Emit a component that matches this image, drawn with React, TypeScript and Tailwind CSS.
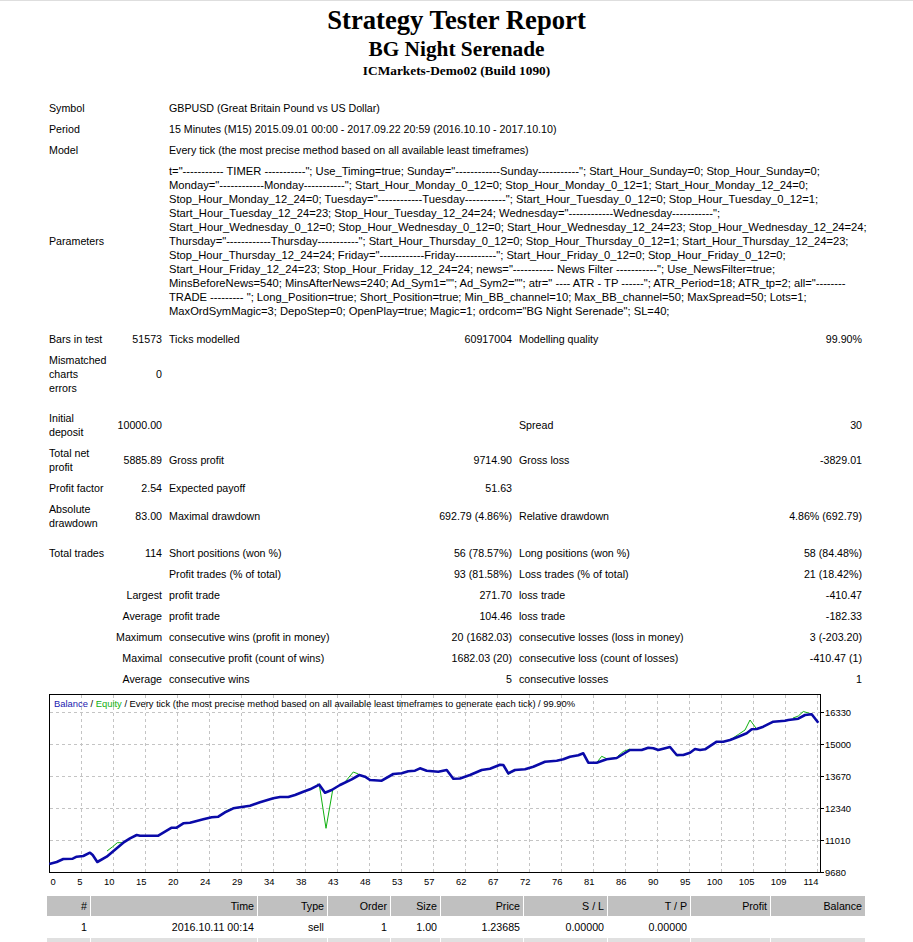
import React from 'react';

const paramLines = [
  't="----------- TIMER -----------"; Use_Timing=true; Sunday="------------Sunday-----------"; Start_Hour_Sunday=0; Stop_Hour_Sunday=0;',
  'Monday="------------Monday-----------"; Start_Hour_Monday_0_12=0; Stop_Hour_Monday_0_12=1; Start_Hour_Monday_12_24=0;',
  'Stop_Hour_Monday_12_24=0; Tuesday="------------Tuesday-----------"; Start_Hour_Tuesday_0_12=0; Stop_Hour_Tuesday_0_12=1;',
  'Start_Hour_Tuesday_12_24=23; Stop_Hour_Tuesday_12_24=24; Wednesday="------------Wednesday-----------";',
  'Start_Hour_Wednesday_0_12=0; Stop_Hour_Wednesday_0_12=0; Start_Hour_Wednesday_12_24=23; Stop_Hour_Wednesday_12_24=24;',
  'Thursday="------------Thursday-----------"; Start_Hour_Thursday_0_12=0; Stop_Hour_Thursday_0_12=1; Start_Hour_Thursday_12_24=23;',
  'Stop_Hour_Thursday_12_24=24; Friday="------------Friday-----------"; Start_Hour_Friday_0_12=0; Stop_Hour_Friday_0_12=0;',
  'Start_Hour_Friday_12_24=23; Stop_Hour_Friday_12_24=24; news="----------- News Filter -----------"; Use_NewsFilter=true;',
  'MinsBeforeNews=540; MinsAfterNews=240; Ad_Sym1=""; Ad_Sym2=""; atr=" ---- ATR - TP ------"; ATR_Period=18; ATR_tp=2; all="--------',
  'TRADE --------- "; Long_Position=true; Short_Position=true; Min_BB_channel=10; Max_BB_channel=50; MaxSpread=50; Lots=1;',
  'MaxOrdSymMagic=3; DepoStep=0; OpenPlay=true; Magic=1; ordcom="BG Night Serenade"; SL=40;',
];

// [label, value, label, value, label, value]
const statRows: { cells: React.ReactNode[]; spacerBefore?: number }[] = [
  { cells: ['Bars in test', '51573', 'Ticks modelled', '60917004', 'Modelling quality', '99.90%'], spacerBefore: 6 },
  { cells: [<>Mismatched<br />charts<br />errors</>, '0', '', '', '', ''] },
  { cells: [<>Initial<br />deposit</>, '10000.00', '', '', 'Spread', '30'], spacerBefore: 8 },
  { cells: [<>Total net<br />profit</>, '5885.89', 'Gross profit', '9714.90', 'Gross loss', '-3829.01'] },
  { cells: ['Profit factor', '2.54', 'Expected payoff', '51.63', '', ''] },
  { cells: [<>Absolute<br />drawdown</>, '83.00', 'Maximal drawdown', '692.79 (4.86%)', 'Relative drawdown', '4.86% (692.79)'] },
  { cells: ['Total trades', '114', 'Short positions (won %)', '56 (78.57%)', 'Long positions (won %)', '58 (84.48%)'], spacerBefore: 8 },
  { cells: ['', '', 'Profit trades (% of total)', '93 (81.58%)', 'Loss trades (% of total)', '21 (18.42%)'] },
  { cells: ['', 'Largest', 'profit trade', '271.70', 'loss trade', '-410.47'] },
  { cells: ['', 'Average', 'profit trade', '104.46', 'loss trade', '-182.33'] },
  { cells: ['', 'Maximum', 'consecutive wins (profit in money)', '20 (1682.03)', 'consecutive losses (loss in money)', '3 (-203.20)'] },
  { cells: ['', 'Maximal', 'consecutive profit (count of wins)', '1682.03 (20)', 'consecutive loss (count of losses)', '-410.47 (1)'] },
  { cells: ['', 'Average', 'consecutive wins', '5', 'consecutive losses', '1'] },
];

const balance: [number, number][] = [
  [4.3, 170], [11.7, 168], [18.3, 165], [27.7, 164.7], [31.7, 162.7], [38.3, 162], [45, 158.7], [47.7, 161],
  [52.3, 168], [61.7, 162.7], [78.3, 148.7], [85, 144.3], [91.7, 141], [95, 141.7], [113.3, 141.7], [120, 137.7],
  [126.7, 133.7], [131.7, 133.7], [138.3, 129.3], [145, 128.7], [151.7, 127], [158.3, 125.3], [166.7, 123.3],
  [173.3, 122.7], [180, 118.3], [188.3, 114.3], [195, 113.3], [205, 111.7], [215, 108.3], [228.3, 104.3],
  [235, 103], [243.3, 103], [250, 101], [258.3, 97.7], [265, 95.3], [274.3, 90.7], [280, 98.7], [286.7, 96],
  [295, 91], [306.7, 85.3], [314.3, 81], [320, 82.7], [325, 86], [336.7, 86.7], [348.3, 80], [356.7, 79.3],
  [363.3, 77.3], [370, 76.7], [375, 74.3], [381.7, 76.7], [393.3, 77.7], [401.7, 76], [408.3, 84.7], [415, 84.5],
  [425, 81], [436.7, 76], [445, 74.7], [455, 70.7], [458.3, 71], [463.3, 79.3], [470, 76], [480, 75.3],
  [488.3, 72.7], [500, 67.7], [511.7, 66.7], [518.3, 65.3], [525, 62.7], [533.3, 61.3], [538.3, 59.3],
  [543.3, 68.7], [551.7, 68.7], [561.7, 65.3], [571.7, 64], [578.3, 60], [585, 56], [596.7, 56], [603.3, 53.7],
  [608.3, 54.3], [613.3, 56], [625, 53], [631.7, 61], [638.3, 61], [645, 58.7], [650, 55], [655, 56], [660, 55.3],
  [671.7, 47.7], [678.3, 47.7], [685, 46], [693.3, 42.7], [701.7, 39.3], [706.7, 35.3], [711.7, 35], [718.3, 32.7],
  [728.3, 27.7], [740, 26.7], [743.3, 26], [753.3, 24.7], [760, 21], [766.7, 20.3], [773.3, 28.7],
];

const equitySegs: [number, number][][] = [
  [[62, 157], [67.7, 152.7], [72.3, 148.7], [78.3, 148.7], [85, 144.3]],
  [[173.3, 122.7], [180, 117.5], [184, 115.5], [190, 113.5], [195, 113.3]],
  [[272, 90], [274.3, 90.7], [281, 134.3], [287.7, 96]],
  [[300, 88], [308.3, 78], [313.3, 80]],
  [[458.3, 71], [463.3, 80.5], [470, 76]],
  [[551.7, 68.7], [556.7, 62.3], [561.7, 64.7], [571.7, 64]],
  [[573, 62], [578.3, 57.5], [585, 55]],
  [[625, 53], [631.7, 62], [638.3, 61]],
  [[688, 44], [693.3, 40.5], [700, 36], [705, 26], [711.7, 35]],
  [[748, 24], [753.3, 22], [758.3, 17.5], [765, 19.5], [770, 24]],
];

const xLabels = [0, 5, 10, 15, 20, 24, 29, 34, 38, 43, 48, 53, 57, 62, 67, 72, 76, 81, 86, 90, 95, 100, 105, 109, 114];
const yLabels = ['16330', '15000', '13670', '12340', '11010', '9680'];

const toPoints = (pts: [number, number][]) => pts.map(([x, y]) => `${x},${y}`).join(' ');

const Chart = () => (
  <svg width="820" height="200" className="block" fontFamily="'Liberation Sans', Arial, sans-serif">
    {/* grid */}
    {Array.from({ length: 24 }, (_, i) => 4.5 + 32 * (i + 1)).map((x) => (
      <line key={x} x1={x} y1={1} x2={x} y2={178} stroke="#c4c4c4" strokeDasharray="3 3" />
    ))}
    {[18.5, 50.5, 82.5, 114.5, 146.5].map((y) => (
      <line key={y} x1={5} y1={y} x2={775} y2={y} stroke="#c4c4c4" strokeDasharray="3 3" />
    ))}
    {/* frame */}
    <rect x={4.5} y={0.5} width={771} height={178} fill="none" stroke="#000" />
    {[18.5, 50.5, 82.5, 114.5, 146.5, 178.5].map((y) => (
      <line key={y} x1={775} y1={y} x2={779} y2={y} stroke="#000" />
    ))}
    {/* series */}
    {equitySegs.map((seg, i) => (
      <polyline key={i} points={toPoints(seg)} fill="none" stroke="#10b010" strokeWidth={1} />
    ))}
    <polyline points={toPoints(balance)} fill="none" stroke="#0a0aa8" strokeWidth={2.6} strokeLinejoin="round" />
    {/* legend */}
    <text x={9} y={9} fontSize="9.4" dominantBaseline="central" fill="#000">
      <tspan fill="#1a1ab0">Balance</tspan>
      <tspan> / </tspan>
      <tspan fill="#10b010">Equity</tspan>
      <tspan> / Every tick (the most precise method based on all available least timeframes to generate each tick) / 99.90%</tspan>
    </text>
    {/* axes */}
    {yLabels.map((l, i) => (
      <text key={l} x={780} y={18.5 + 32 * i} fontSize="9.4" dominantBaseline="central" fill="#000">
        {l}
      </text>
    ))}
    {xLabels.map((l, i) =>
      i === 0 ? (
        <text key={l} x={5.5} y={187} fontSize="9.4" dominantBaseline="central" fill="#000">
          {l}
        </text>
      ) : (
        <text key={l} x={4 + 32 * i + 1.5} y={187} fontSize="9.4" dominantBaseline="central" textAnchor="end" fill="#000">
          {l}
        </text>
      )
    )}
  </svg>
);

const tradeHead = ['#', 'Time', 'Type', 'Order', 'Size', 'Price', 'S / L', 'T / P', 'Profit', 'Balance'];
const trades = [
  ['1', '2016.10.11 00:14', 'sell', '1', '1.00', '1.23685', '0.00000', '0.00000', '', ''],
  ['', '', '', '', '', '', '', '', '', ''],
];

export default function App() {
  return (
    <div className="min-h-screen bg-white text-black font-['Liberation_Sans',Arial,sans-serif] text-[10.67px]">
      <div className="h-px bg-[#dedede]" />
      <div className="h-[97px] flex flex-col items-center font-['Liberation_Serif','Times_New_Roman',serif] font-bold">
        <div className="mt-[4px] text-[26.67px] leading-[30px]">Strategy Tester Report</div>
        <div className="mt-[2px] text-[21.33px] leading-[24px]">BG Night Serenade</div>
        <div className="mt-[2px] text-[13.33px] leading-[16px]">ICMarkets-Demo02 (Build 1090)</div>
      </div>

      <div className="ml-[46px] w-[820px] grid grid-cols-[66px_52px_230px_118px_214px_134px] gap-px items-center leading-[14px]">
        <div className="col-span-2 p-[3px]">Symbol</div>
        <div className="col-span-4 p-[3px]">GBPUSD (Great Britain Pound vs US Dollar)</div>
        <div className="col-span-2 p-[3px]">Period</div>
        <div className="col-span-4 p-[3px]">15 Minutes (M15) 2015.09.01 00:00 - 2017.09.22 20:59 (2016.10.10 - 2017.10.10)</div>
        <div className="col-span-2 p-[3px]">Model</div>
        <div className="col-span-4 p-[3px]">Every tick (the most precise method based on all available least timeframes)</div>
        <div className="col-span-2 p-[3px]">Parameters</div>
        <div className="col-span-4 p-[3px] text-[11.2px]">
          {paramLines.map((l, i) => (
            <div key={i} className="whitespace-pre">{l}</div>
          ))}
        </div>

        {statRows.map((row, r) => (
          <React.Fragment key={r}>
            {row.spacerBefore === 6 && <div className="col-span-6 h-[6px]" />}
            {row.spacerBefore === 8 && <div className="col-span-6 h-[8px]" />}
            {row.cells.map((c, i) => (
              <div key={i} className={i % 2 === 1 ? 'p-[3px] text-right whitespace-nowrap' : 'p-[3px] whitespace-nowrap'}>
                {c}
              </div>
            ))}
          </React.Fragment>
        ))}
      </div>

      <div className="ml-[45px] mt-[5px]">
        <Chart />
      </div>

      <div className="ml-[47px] mt-[2px] grid grid-cols-[43px_166px_69px_62px_49px_82px_83px_82px_79px_94px] gap-px leading-[14px] text-right">
        {tradeHead.map((h) => (
          <div key={h} className="bg-[#c0c0c0] p-[3px]">{h}</div>
        ))}
        {trades.map((t, r) =>
          t.map((c, i) => (
            <div key={`${r}-${i}`} className={r % 2 === 1 ? 'bg-[#e0e0e0] p-[3px] h-[20px]' : 'p-[3px]'}>
              {c}
            </div>
          ))
        )}
      </div>
    </div>
  );
}
